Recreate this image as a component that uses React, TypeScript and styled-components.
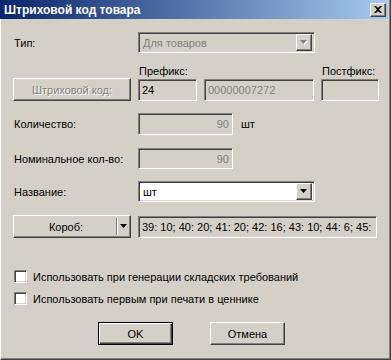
import React from "react";
import styled, { createGlobalStyle, css } from "styled-components";

const Global = createGlobalStyle`
  html, body { margin: 0; padding: 0; background: #d4d0c8; }
  body { font-family: "Liberation Sans", Arial, sans-serif; font-size: 11px; color: #000; }
  * { box-sizing: border-box; }
`;

const Window = styled.div`
  width: 391px;
  height: 360px;
  background: #d4d0c8;
  border-left: 1px solid #ffffff;
  border-right: 1px solid #404040;
  border-bottom: 1px solid #404040;
  box-shadow: inset -1px -1px #808080;
  padding: 0 2px 0 0;
  display: flex;
  flex-direction: column;
`;

const TitleBar = styled.div`
  height: 19px;
  margin-left: -1px;
  background: linear-gradient(to right, #0a246a, #a6caf0);
  display: flex;
  align-items: center;
  justify-content: space-between;
  padding: 0 2px 0 4px;
`;

const Title = styled.span`
  color: #fff;
  font-weight: bold;
  font-size: 12px;
  font-family: "Liberation Sans", Arial, sans-serif;
`;

const raised = css`
  background: #d4d0c8;
  border: 1px solid;
  border-color: #ffffff #404040 #404040 #ffffff;
  box-shadow: inset -1px -1px #808080, inset 1px 1px #d4d0c8;
`;

const sunken = css`
  border: 1px solid;
  border-color: #808080 #ffffff #ffffff #808080;
  box-shadow: inset 1px 1px #404040, inset -1px -1px #d4d0c8;
`;

const CloseBtn = styled.div`
  ${raised};
  width: 16px;
  height: 14px;
  display: flex;
  align-items: center;
  justify-content: center;
`;

const Body = styled.div`
  flex: 1;
  display: flex;
  flex-direction: column;
  padding: 0 0 0 12px;
`;

const Row = styled.div<{ $top: number }>`
  display: flex;
  align-items: center;
  margin-top: ${(p) => p.$top}px;
`;

const Label = styled.span<{ $w?: number }>`
  width: ${(p) => (p.$w ? p.$w + "px" : "auto")};
  flex: none;
  padding-left: 1px;
`;

const Field = styled.div<{ $w: number; $h?: number; $white?: boolean; $gray?: boolean; $right?: boolean; $ml?: number }>`
  ${sunken};
  width: ${(p) => p.$w}px;
  height: ${(p) => p.$h ?? 22}px;
  margin-left: ${(p) => p.$ml ?? 0}px;
  background: ${(p) => (p.$white ? "#ffffff" : "#d4d0c8")};
  color: ${(p) => (p.$gray ? "#808080" : "#000")};
  display: flex;
  align-items: center;
  justify-content: ${(p) => (p.$right ? "flex-end" : "flex-start")};
  padding: 0 3px;
  white-space: nowrap;
  overflow: hidden;
  flex: none;
`;

const Combo = styled.div<{ $w: number; $white?: boolean; $disabled?: boolean }>`
  ${sunken};
  width: ${(p) => p.$w}px;
  height: 21px;
  background: ${(p) => (p.$white ? "#ffffff" : "#d4d0c8")};
  color: ${(p) => (p.$disabled ? "#808080" : "#000")};
  display: flex;
  align-items: center;
  justify-content: space-between;
  padding: 2px 2px 2px 4px;
  flex: none;
`;

const ArrowBtn = styled.div`
  ${raised};
  width: 16px;
  height: 17px;
  display: flex;
  align-items: center;
  justify-content: center;
`;

const Button = styled.div<{ $w: number; $disabled?: boolean; $default?: boolean }>`
  width: ${(p) => p.$w}px;
  height: 23px;
  flex: none;
  display: flex;
  align-items: center;
  justify-content: center;
  color: ${(p) => (p.$disabled ? "#808080" : "#000")};
  text-shadow: ${(p) => (p.$disabled ? "1px 1px #ffffff" : "none")};
  ${(p) =>
    p.$default
      ? css`
          background: #d4d0c8;
          border: 1px solid #000;
          box-shadow: inset 1px 1px #ffffff, inset -1px -1px #404040, inset -2px -2px #808080;
        `
      : raised};
`;

const SplitButton = styled.div`
  ${raised};
  width: 118px;
  height: 23px;
  display: flex;
  align-items: stretch;
  flex: none;
`;

const SplitMain = styled.div`
  flex: 1;
  display: flex;
  align-items: center;
  justify-content: center;
  padding-left: 2px;
`;

const SplitDivider = styled.div`
  width: 2px;
  margin: 2px 0;
  border-left: 1px solid #808080;
  border-right: 1px solid #ffffff;
`;

const SplitArrow = styled.div`
  width: 12px;
  display: flex;
  align-items: center;
  justify-content: center;
`;

const TopLabels = styled.div`
  display: flex;
  margin-top: 11px;
  margin-left: 125px;
  height: 14px;
  align-items: center;
`;

const Checks = styled.div`
  display: flex;
  flex-direction: column;
  gap: 9px;
  margin-top: 32px;
`;

const CheckRow = styled.label`
  display: flex;
  align-items: center;
  gap: 6px;
  height: 13px;
`;

const CheckBox = styled.span`
  ${sunken};
  width: 13px;
  height: 13px;
  background: #ffffff;
  flex: none;
  margin-left: 1px;
`;

const Footer = styled.div`
  display: flex;
  gap: 37px;
  margin-top: 17px;
  margin-left: 85px;
`;

const Unit = styled.span`
  margin-left: 8px;
`;

const Tri = ({ disabled }: { disabled?: boolean }) => (
  <svg width="8" height="5" viewBox="0 0 8 5">
    {disabled && <polygon points="1,1 8,1 4.5,5" fill="#ffffff" />}
    <polygon points="0,0 7,0 3.5,4" fill={disabled ? "#808080" : "#000"} />
  </svg>
);

export default function App() {
  return (
    <>
      <Global />
      <Window>
        <TitleBar>
          <Title>Штриховой код товара</Title>
          <CloseBtn>
            <svg width="8" height="7" viewBox="0 0 8 7">
              <path d="M0 0 L2 0 L4 2 L6 0 L8 0 L5 3.5 L8 7 L6 7 L4 5 L2 7 L0 7 L3 3.5 Z" fill="#000" />
            </svg>
          </CloseBtn>
        </TitleBar>
        <Body>
          <Row $top={13}>
            <Label $w={125}>Тип:</Label>
            <Combo $w={177} $disabled>
              <span>Для товаров</span>
              <ArrowBtn>
                <Tri disabled />
              </ArrowBtn>
            </Combo>
          </Row>
          <TopLabels>
            <Label $w={183}>Префикс:</Label>
            <Label>Постфикс:</Label>
          </TopLabels>
          <Row $top={0}>
            <Button $w={118} $disabled>Штриховой код:</Button>
            <Field $w={59} $ml={7}>24</Field>
            <Field $w={110} $ml={7} $gray>00000007272</Field>
            <Field $w={58} $ml={7} />
          </Row>
          <Row $top={12}>
            <Label $w={125}>Количество:</Label>
            <Field $w={95} $gray $right>90</Field>
            <Unit>шт</Unit>
          </Row>
          <Row $top={13}>
            <Label $w={125}>Номинальное кол-во:</Label>
            <Field $w={95} $h={21} $gray $right>90</Field>
          </Row>
          <Row $top={12}>
            <Label $w={125}>Название:</Label>
            <Combo $w={177} $white>
              <span>шт</span>
              <ArrowBtn>
                <Tri />
              </ArrowBtn>
            </Combo>
          </Row>
          <Row $top={13}>
            <SplitButton>
              <SplitMain>Короб:</SplitMain>
              <SplitDivider />
              <SplitArrow>
                <Tri />
              </SplitArrow>
            </SplitButton>
            <Field $w={239} $ml={7}>39: 10; 40: 20; 41: 20; 42: 16; 43: 10; 44: 6; 45:</Field>
          </Row>
          <Checks>
            <CheckRow>
              <CheckBox />
              <span>Использовать при генерации складских требований</span>
            </CheckRow>
            <CheckRow>
              <CheckBox />
              <span>Использовать первым при печати в ценнике</span>
            </CheckRow>
          </Checks>
          <Footer>
            <Button $w={75} $default>OK</Button>
            <Button $w={75}>Отмена</Button>
          </Footer>
        </Body>
      </Window>
    </>
  );
}
